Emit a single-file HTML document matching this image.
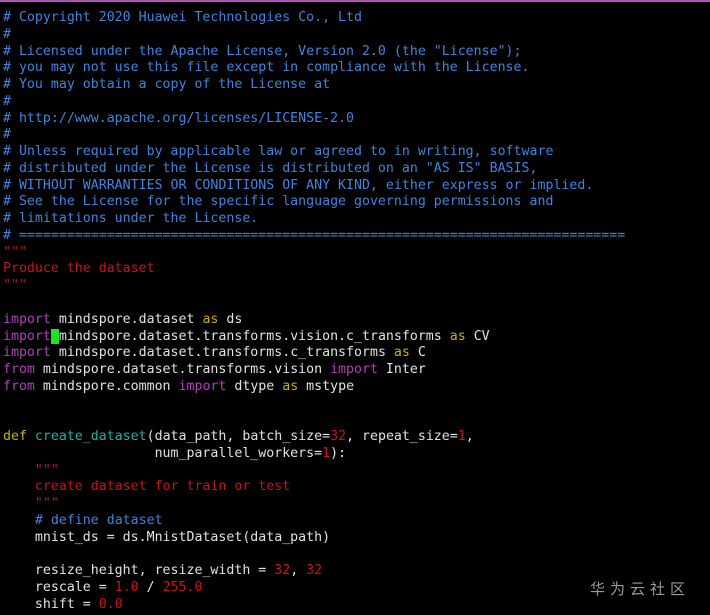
<!DOCTYPE html><html><head><meta charset="utf-8"><style>
body{margin:0;background:#000;width:710px;height:615px;overflow:hidden;position:relative}
.bar{position:absolute;left:0;top:0;width:710px;height:2px;background:#b050b8}
pre{position:absolute;left:3px;top:10px;margin:0;font-family:"DejaVu Sans Mono","Liberation Mono",monospace;font-size:13.25px;line-height:16.77px;color:#e2e2e2}
.c{color:#3d86e0}.s{color:#c8141c}.k{color:#b43cc0}.y{color:#c9b400}.f{color:#1fb3a6}
.cur{background:#22e022;color:#000}
.wm{position:absolute;left:590px;top:578px;font-family:"Noto Sans CJK SC",sans-serif;font-size:15px;letter-spacing:5px;color:#9a9a9a}
</style></head><body><div class="bar"></div><pre><span class="c"># Copyright 2020 Huawei Technologies Co., Ltd
#
# Licensed under the Apache License, Version 2.0 (the "License");
# you may not use this file except in compliance with the License.
# You may obtain a copy of the License at
#
# http://www.apache.org/licenses/LICENSE-2.0
#
# Unless required by applicable law or agreed to in writing, software
# distributed under the License is distributed on an "AS IS" BASIS,
# WITHOUT WARRANTIES OR CONDITIONS OF ANY KIND, either express or implied.
# See the License for the specific language governing permissions and
# limitations under the License.
# ============================================================================</span>
<span class="s">"""
Produce the dataset
"""</span>

<span class="k">import</span> mindspore.dataset <span class="y">as</span> ds
<span class="k">import</span><span class="cur"> </span>mindspore.dataset.transforms.vision.c_transforms <span class="y">as</span> CV
<span class="k">import</span> mindspore.dataset.transforms.c_transforms <span class="y">as</span> C
<span class="k">from</span> mindspore.dataset.transforms.vision <span class="k">import</span> Inter
<span class="k">from</span> mindspore.common <span class="k">import</span> dtype <span class="y">as</span> mstype


<span class="y">def</span> <span class="f">create_dataset</span>(data_path, batch_size=<span class="s">32</span>, repeat_size=<span class="s">1</span>,
                   num_parallel_workers=<span class="s">1</span>):
    <span class="s">"""
    create dataset for train or test
    """</span>
    <span class="c"># define dataset</span>
    mnist_ds = ds.MnistDataset(data_path)

    resize_height, resize_width = <span class="s">32</span>, <span class="s">32</span>
    rescale = <span class="s">1.0</span> / <span class="s">255.0</span>
    shift = <span class="s">0.0</span></pre><div class="wm">华为云社区</div></body></html>
